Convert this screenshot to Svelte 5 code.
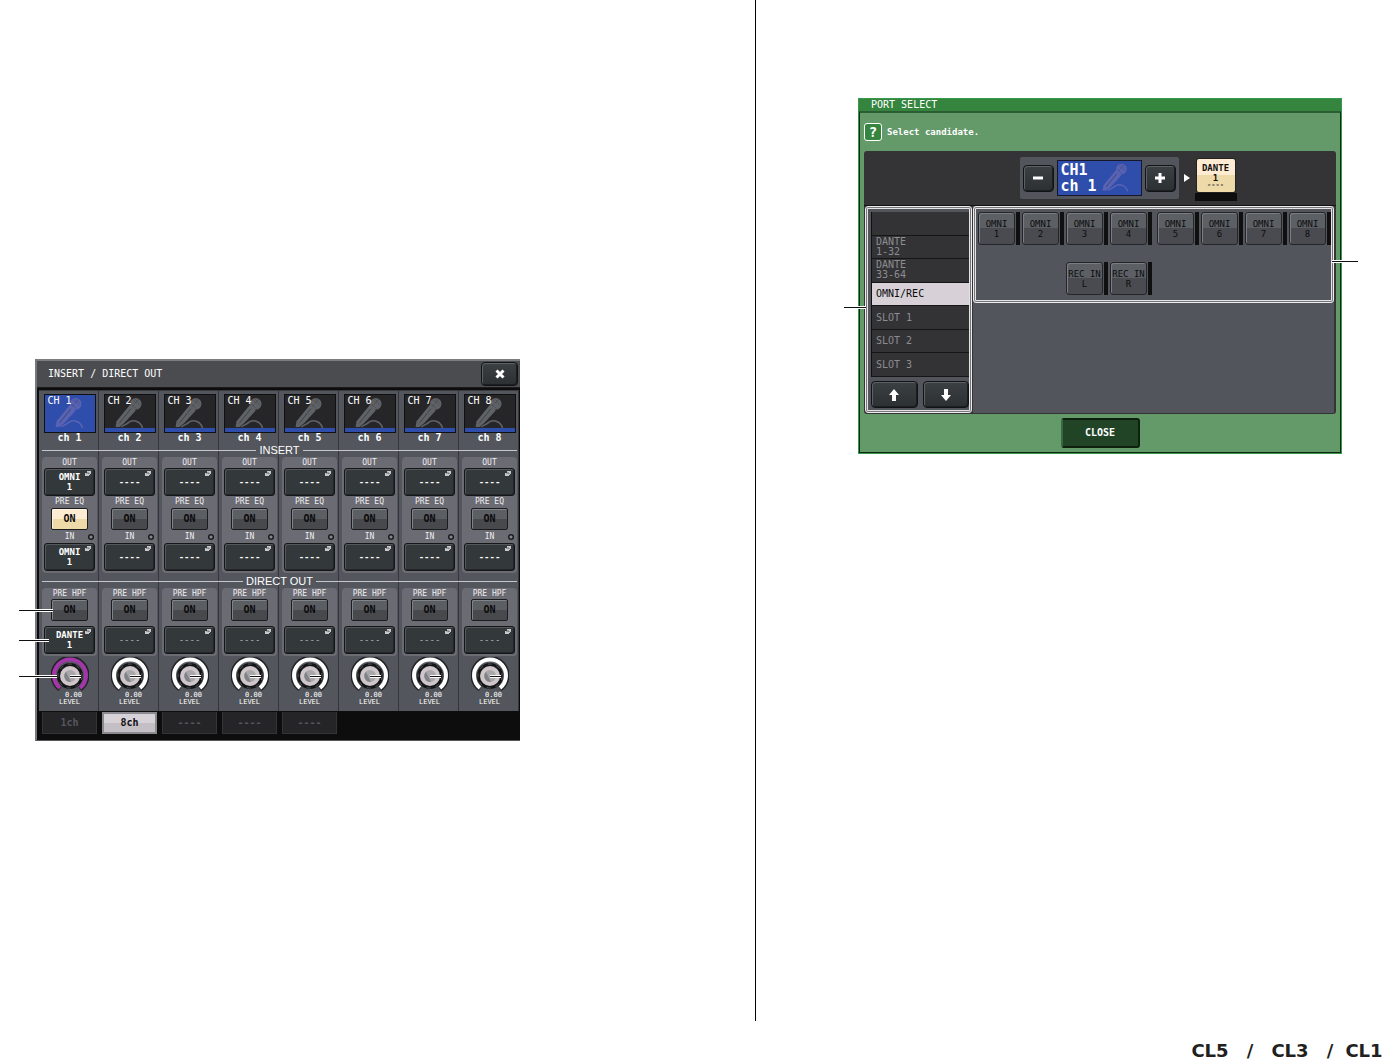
<script>
  const channels = [1, 2, 3, 4, 5, 6, 7, 8].map((n) => ({
    n,
    insert: n === 1 ? ['OMNI', '1'] : ['----'],
    direct: n === 1 ? ['DANTE', '1'] : ['----'],
    active: n === 1
  }));

  const tabs = ['1ch', '8ch', '----', '----', '----'];
  let currentTab = 1;

  const sources = [
    [''],
    ['DANTE', '1-32'],
    ['DANTE', '33-64'],
    ['OMNI/REC'],
    ['SLOT 1'],
    ['SLOT 2'],
    ['SLOT 3']
  ];
  let currentSource = 3;

  const portGroups = [
    ['1', '2', '3', '4'],
    ['5', '6', '7', '8']
  ];
</script>

{#snippet mic()}
  <svg class="mic" viewBox="0 0 52 38" aria-hidden="true">
    <path d="M17 33 C21 30 22 31 25 28 C30 25 37 27 39 34" fill="none" stroke="currentColor" stroke-width="1.6" />
    <path d="M26 10 L32 16 L20 29 L15 33 L11 33 L12 27 Z" fill="currentColor" />
    <path d="M27 14 L15 29" stroke="#0005" stroke-width="1" />
    <circle cx="32" cy="9" r="6" fill="currentColor" />
    <path d="M27 9 L33 14 M29 5 L36 11 M31 4 L37 9 M28 12 L35 4" stroke="#0003" stroke-width="0.8" />
  </svg>
{/snippet}

{#snippet assign(lines, dim)}
  <button class="assign" class:dim>
    <svg class="popup" viewBox="0 0 6 5" aria-hidden="true">
      <path d="M2 0H6V3H5V4H2Z M0 2H4V5H0Z" fill="#c8c8cc" />
      <path d="M1 2H4V3" fill="none" stroke="#33383a" stroke-width="0.6" />
    </svg>
    {#each lines as line}
      <span>{line}</span>
    {/each}
  </button>
{/snippet}

<div class="sheet">
  <section class="page left">
    <div class="insert-panel">
      <header class="insert-title">
        <h1>INSERT / DIRECT OUT</h1>
        <button class="dark close-x" aria-label="Close">
          <svg width="10" height="10" viewBox="0 0 10 10" aria-hidden="true">
            <path d="M1.5 1.5L8.5 8.5M8.5 1.5L1.5 8.5" stroke="#fff" stroke-width="3" />
          </svg>
        </button>
      </header>

      <div class="rack">
        <div class="row">
          {#each channels as ch}
            <div class="channel">
              <button class="tile" class:active={ch.active}>
                {@render mic()}
                <span>CH {ch.n}</span>
              </button>
              <span class="name">ch {ch.n}</span>
            </div>
          {/each}
        </div>

        <h2>INSERT</h2>
        <div class="row">
          {#each channels as ch}
            <div class="group">
              <span class="caption">OUT</span>
              {@render assign(ch.insert, false)}
              <span class="caption thin">PRE EQ</span>
              <button class="on" class:lit={ch.active}>ON</button>
              <span class="caption in">IN<i class="lamp"></i></span>
              {@render assign(ch.insert, false)}
            </div>
          {/each}
        </div>

        <h2 class="direct">DIRECT OUT</h2>
        <div class="row">
          {#each channels as ch}
            <div class="strip">
              <div class="group">
                <span class="caption thin">PRE HPF</span>
                <button class="on">ON</button>
                {@render assign(ch.direct, !ch.active)}
                {#if ch.active}
                  <i class="callout on-line"></i>
                  <i class="callout assign-line"></i>
                {/if}
              </div>
              <label class="knob">
                <svg viewBox="0 0 38 34" aria-hidden="true">
                  <path d="M9 32 A17 17 0 1 1 29 32" fill="none" stroke="#222326" stroke-width="5" />
                  <path d="M9 31 A16 16 0 1 1 29 31" fill="none" stroke={ch.active ? '#a336a8' : '#fff'} stroke-width="4" />
                  <circle cx="19" cy="19" r="13" fill="#141516" />
                  <circle cx="19" cy="19" r="12" fill="none" stroke="#54565a" stroke-width="1" stroke-dasharray="4 5" />
                  <circle cx="19" cy="19" r="10" fill="#cfc6c9" />
                  <circle cx="19" cy="19" r="6" fill="#a9a6aa" />
                  <path d="M15 15 A6 6 0 0 0 20 25 Z" fill="#7f8286" />
                  <path d="M19 19.5H30" stroke="#fff" stroke-width="3" />
                  <path d="M19 19.5H31" stroke="#111" stroke-width="1" />
                </svg>
                <input type="range" min="-60" max="10" value="0" />
                <span class="value">0.00</span>
                <span>LEVEL</span>
                {#if ch.active}
                  <i class="callout knob-line"></i>
                {/if}
              </label>
            </div>
          {/each}
        </div>
      </div>

      <nav class="tabs">
        {#each tabs as tab, i}
          <button class:current={i === currentTab} on:click={() => (currentTab = i)}>{tab}</button>
        {/each}
      </nav>
    </div>
  </section>

  <section class="page right">
    <div class="port-panel">
      <h1 class="port-title">PORT SELECT</h1>
      <div class="port-body">
        <p class="prompt"><span class="question">?</span>Select candidate.</p>

        <div class="browser">
          <div class="target">
            <div class="stepper">
              <button class="dark step" aria-label="Previous channel">
                <svg width="12" height="12" viewBox="0 0 12 12"><path d="M1 6H11" stroke="#fff" stroke-width="3" /></svg>
              </button>
              <div class="current-channel">
                <span>CH1</span>
                <span>ch 1</span>
                {@render mic()}
              </div>
              <button class="dark step" aria-label="Next channel">
                <svg width="12" height="12" viewBox="0 0 12 12"><path d="M1 6H11M6 1V11" stroke="#fff" stroke-width="3" /></svg>
              </button>
            </div>
            <svg class="pointer" width="6" height="8" viewBox="0 0 6 8" aria-hidden="true"><path d="M0 0L6 4L0 8Z" fill="#fff" /></svg>
            <div class="assigned">
              <button>
                <span>DANTE</span>
                <span>1</span>
                <span class="blank">----</span>
              </button>
            </div>
          </div>

          <div class="columns">
            <div class="frame source-frame">
              <div class="sources">
                {#each sources as source, i}
                  <button class:current={i === currentSource} on:click={() => (currentSource = i)} aria-label={source[0] || 'Empty'}>
                    {#each source as line}
                      <span>{line}</span>
                    {/each}
                  </button>
                {/each}
              </div>
              <div class="arrows">
                <button class="dark" aria-label="Up">
                  <svg width="12" height="12" viewBox="0 0 12 12"><path d="M6 0L11 6H8V12H4V6H1Z" fill="#fff" /></svg>
                </button>
                <button class="dark" aria-label="Down">
                  <svg width="12" height="12" viewBox="0 0 12 12"><path d="M6 12L11 6H8V0H4V6H1Z" fill="#fff" /></svg>
                </button>
              </div>
              <i class="callout source-line"></i>
            </div>

            <div class="port-area">
              <div class="frame port-frame">
                {#each portGroups as group, g}
                  <div class="ports">
                    {#each group as port}
                      <div class="port"><button><span>OMNI</span><span>{port}</span></button></div>
                    {/each}
                    {#if g === 0}
                      <div class="port rec"><button><span>REC IN</span><span>L</span></button></div>
                      <div class="port"><button><span>REC IN</span><span>R</span></button></div>
                    {/if}
                  </div>
                {/each}
                <i class="callout port-line"></i>
              </div>
            </div>
          </div>
        </div>

        <button class="close">CLOSE</button>
      </div>
    </div>

    <footer>
      <span>CL5</span><span>/</span><span>CL3</span><span>/</span><span>CL1</span>
    </footer>
  </section>
</div>

<style>
  :global(body) {
    margin: 0;
    background: #fff;
  }

  .sheet {
    display: grid;
    grid-template-columns: minmax(0, 756fr) minmax(0, 634fr);
    min-height: 100vh;
    font-family: 'DejaVu Sans Mono', 'Liberation Mono', monospace;
    font-size: 10px;
    line-height: 10px;
    color: #fff;
  }

  .sheet * {
    box-sizing: border-box;
  }

  h1, h2, p {
    margin: 0;
    font-weight: normal;
  }

  h1 {
    font-size: 10px;
    line-height: 12px;
  }

  button {
    font: inherit;
    color: inherit;
    padding: 0;
    border: 0;
    cursor: pointer;
  }

  button span {
    display: block;
  }

  .left {
    margin-bottom: 40px;
    padding: 359px 35px 0;
    border-right: 1px solid #000;
  }

  .right {
    display: flex;
    flex-direction: column;
    padding: 98px 48px 0 102px;
  }

  .dark {
    display: flex;
    align-items: center;
    justify-content: center;
    background: linear-gradient(#3b4042, #2c3032);
    border: 1px solid #111314;
    border-radius: 4px;
    box-shadow: inset 1px 1px #5d6064, inset -1px -1px #1c1f21;
  }

  /* insert / direct out window */
  .insert-panel {
    max-width: 485px;
    background: #0d0d0d;
    border-left: 2px solid #77787f;
    border-bottom: 1px solid #55565a;
  }

  .insert-title {
    display: flex;
    justify-content: space-between;
    align-items: center;
    height: 29px;
    padding: 0 2px 0 11px;
    background: #4b4c50;
    border-top: 2px solid #7b7e80;
    border-bottom: 1px solid #1d1a1b;
  }

  .close-x {
    width: 37px;
    height: 24px;
  }

  .rack {
    margin: 2px 1px 0 2px;
    padding-top: 3px;
    border-top: 1px solid #393a3e;
    background: linear-gradient(to right, transparent calc(100% - 1px), #35363b 0) 0 0 / 12.5% 100%, #53565d;
  }

  .row {
    display: grid;
    grid-template-columns: repeat(8, 1fr);
  }

  .row > * {
    margin: 0 2px 0 3px;
  }

  .channel {
    display: flex;
    flex-direction: column;
    align-items: center;
  }

  .tile {
    position: relative;
    width: 52px;
    height: 38px;
    background: #262628;
    border: 1px solid #101012;
    border-bottom: 0;
    box-shadow: inset 0 -4px #2f4eab, 0 1px #111;
    color: #5f6267;
  }

  .tile.active {
    background: #2f4eab;
    color: #5963b4;
  }

  .tile .mic {
    position: absolute;
    inset: 0;
    width: 100%;
    height: 100%;
  }

  .tile span {
    position: absolute;
    top: 1px;
    left: 3px;
    color: #fff;
  }

  .name {
    margin-top: 1px;
    font-weight: bold;
  }

  h2 {
    display: flex;
    align-items: center;
    gap: 3px;
    padding: 0 2px 0 3px;
    height: 12px;
    margin: 1px 0;
    font: 11px 'Liberation Sans', Arial, sans-serif;
  }

  h2::before,
  h2::after {
    content: '';
    flex: 1;
    height: 1px;
    background: #c5c6c9;
  }

  h2.direct {
    margin: 2px 0 1px;
  }

  .group {
    position: relative;
    display: flex;
    flex-direction: column;
    align-items: center;
    padding: 1px 2px 2px;
    background: #6b6b74;
    border-radius: 4px;
  }

  .caption {
    position: relative;
    width: 100%;
    text-align: center;
    font-size: 8px;
    line-height: 10px;
    color: #eee;
  }

  .thin {
    line-height: 12px;
  }

  .in {
    line-height: 13px;
  }

  .strip .group .thin {
    line-height: 10px;
  }

  .lamp {
    position: absolute;
    right: 1px;
    top: 4px;
    width: 6px;
    height: 6px;
    border-radius: 50%;
    background: radial-gradient(circle at 3px 3px, #85878a 1px, #17181a 2px);
  }

  .assign {
    position: relative;
    width: 100%;
    height: 28px;
    font-size: 9px;
    font-weight: bold;
    background: #33383a;
    border: 1px solid #141617;
    border-radius: 3px;
    box-shadow: inset 1px 1px #54575b, inset -1px -1px #232729;
    color: #fff;
  }

  .dim {
    font-weight: normal;
    color: #b6b8ba;
  }

  .popup {
    position: absolute;
    top: 2px;
    right: 3px;
    width: 6px;
    height: 5px;
  }

  .on {
    width: 37px;
    height: 22px;
    color: #0b0b0c;
    font-weight: bold;
    background: linear-gradient(#5b5e62 50%, #48494d 50%);
    border: 1px solid #1b1c1e;
    border-radius: 2px;
    box-shadow: inset 1px 1px #808388;
  }

  .strip .on {
    margin-bottom: 5px;
  }

  .on.lit {
    background: linear-gradient(#fdebd2 50%, #eedaa8 50%);
    box-shadow: inset 1px 1px #fff3e2;
  }

  .knob {
    position: relative;
    display: flex;
    flex-direction: column;
    align-items: center;
    padding-top: 1px;
    height: 55px;
    font-size: 7px;
    line-height: 7px;
  }

  .knob svg {
    width: 38px;
    height: 34px;
    margin-bottom: 1px;
  }

  .knob input {
    position: absolute;
    inset: 0;
    width: 100%;
    margin: 0;
    opacity: 0;
  }

  .value {
    padding-left: 8px;
  }

  .tabs {
    display: grid;
    grid-template-columns: repeat(8, 1fr);
    margin: 0 1px 0 2px;
    padding: 1px 0 6px;
  }

  .tabs button {
    height: 22px;
    margin: 0 2px 0 3px;
    color: #55565f;
    font-weight: bold;
    background: #252527;
    border: 1px solid #343437;
    border-top: 0;
  }

  .tabs .current {
    color: #111;
    background: linear-gradient(#d7d1d8 50%, #c4bec5 50%);
    border: 2px solid #8b8a90;
  }

  /* leader lines pointing at the numbered controls */
  .callout {
    position: absolute;
    height: 3px;
    background: linear-gradient(#fff 1px, #111 1px 2px, #fff 2px);
  }

  .on-line {
    left: -23px;
    top: 21px;
    width: 34px;
  }

  .assign-line {
    left: -23px;
    top: 51px;
    width: 30px;
  }

  .knob-line {
    left: -23px;
    top: 19px;
    width: 38px;
  }

  .source-line {
    left: -22px;
    top: 99px;
    width: 22px;
  }

  .port-line {
    right: -25px;
    top: 53px;
    width: 26px;
  }

  /* port select window */
  .port-panel {
    max-width: 484px;
    border: 1px solid #35984a;
    background: #35853f;
  }

  .port-title {
    height: 12px;
    padding-left: 12px;
  }

  .port-body {
    display: flex;
    flex-direction: column;
    padding: 10px 4px 4px 4px;
    background: #64996a;
    border: 1px solid #0c2a10;
    border-top: 2px solid #2c5c33;
  }

  .prompt {
    display: flex;
    align-items: center;
    gap: 5px;
    font-size: 9px;
    font-weight: bold;
  }

  .question {
    width: 18px;
    height: 18px;
    border: 1px solid #fff;
    border-radius: 3px;
    background: #35853f;
    font-size: 14px;
    line-height: 16px;
    text-align: center;
  }

  .browser {
    margin-top: 10px;
    background: #343436;
    border-radius: 3px;
  }

  .target {
    display: flex;
    align-items: center;
    justify-content: center;
    height: 54px;
    padding-left: 56px;
    gap: 5px;
  }

  .stepper {
    display: flex;
    align-items: center;
    gap: 3px;
    padding: 3px;
    background: #53555d;
    border-radius: 2px;
  }

  .step {
    width: 31px;
    height: 27px;
  }

  .current-channel {
    position: relative;
    width: 85px;
    height: 36px;
    padding: 1px 3px;
    background: #2f4eab;
    border: 1px solid #16182a;
    font-size: 15px;
    font-weight: bold;
    line-height: 16px;
  }

  .current-channel span {
    display: block;
  }

  .current-channel .mic {
    position: absolute;
    right: 0;
    top: 0;
    width: 50px;
    height: 34px;
    color: #5963b4;
  }

  .assigned {
    margin-top: 3px;
    padding: 0 2px;
    background: linear-gradient(transparent 34px, #0d0d0d 34px);
    height: 42px;
  }

  .assigned button {
    width: 38px;
    height: 33px;
    color: #111;
    font-size: 9px;
    font-weight: bold;
    background: linear-gradient(#fdebd2 50%, #eedaa8 50%);
    border-radius: 2px;
    box-shadow: 0 0 0 1px #222;
  }

  .assigned .blank {
    font-size: 7px;
    line-height: 5px;
    color: #333;
  }

  .columns {
    display: flex;
    padding: 0 2px 1px 1px;
    border-top: 1px solid #111;
    gap: 1px;
  }

  .frame {
    position: relative;
    border: 1px solid #ececec;
    border-radius: 3px;
    box-shadow: inset 0 0 0 1px #77777b, inset 0 0 0 2px #e4e2e4;
    background: #53555d;
  }

  .source-frame {
    width: 107px;
    padding: 5px 2px 4px 5px;
  }

  .sources {
    display: grid;
    grid-auto-rows: 1fr;
    min-height: 165px;
    background: #333335;
    border-left: 1px solid #111;
  }

  .sources button {
    padding: 0 4px;
    text-align: left;
    background: #333335;
    color: #8d8c92;
    font-size: 10px;
    border-bottom: 1px solid #161617;
  }

  .sources .current {
    background: #d7d0d7;
    color: #0b0b0b;
  }

  .arrows {
    display: flex;
    gap: 5px;
    margin-top: 4px;
  }

  .arrows .dark {
    flex: 1;
    height: 27px;
  }

  .port-area {
    flex: 1;
    background: #53555d;
  }

  .port-frame {
    display: flex;
    gap: 5px;
    padding: 5px 2px 7px 4px;
  }

  .ports {
    flex: 1;
    display: grid;
    grid-template-columns: repeat(4, 1fr);
    align-content: start;
    gap: 17px 2px;
  }

  .port {
    border-right: 4px solid #101010;
    height: 33px;
  }

  .rec {
    grid-column: 3;
  }

  .port button {
    width: 37px;
    height: 33px;
    color: #0d0d0e;
    font-size: 9px;
    background: linear-gradient(#5c6065 50%, #4a4b50 50%);
    border: 1px solid #242528;
    border-radius: 3px;
    box-shadow: inset 1px 1px #7a7d82;
  }

  .close {
    align-self: center;
    width: 79px;
    height: 30px;
    margin-top: 4px;
    background: #214326;
    border: 2px solid #10200f;
    border-left-color: #356b3d;
    border-radius: 3px;
    font-weight: bold;
  }

  footer {
    display: grid;
    grid-template-columns: 64px 16px 64px 16px 52px;
    justify-items: center;
    align-self: flex-end;
    margin: auto -48px 0 0;
    color: #231f20;
    font: bold 18px/21px 'DejaVu Sans', sans-serif;
  }
</style>
